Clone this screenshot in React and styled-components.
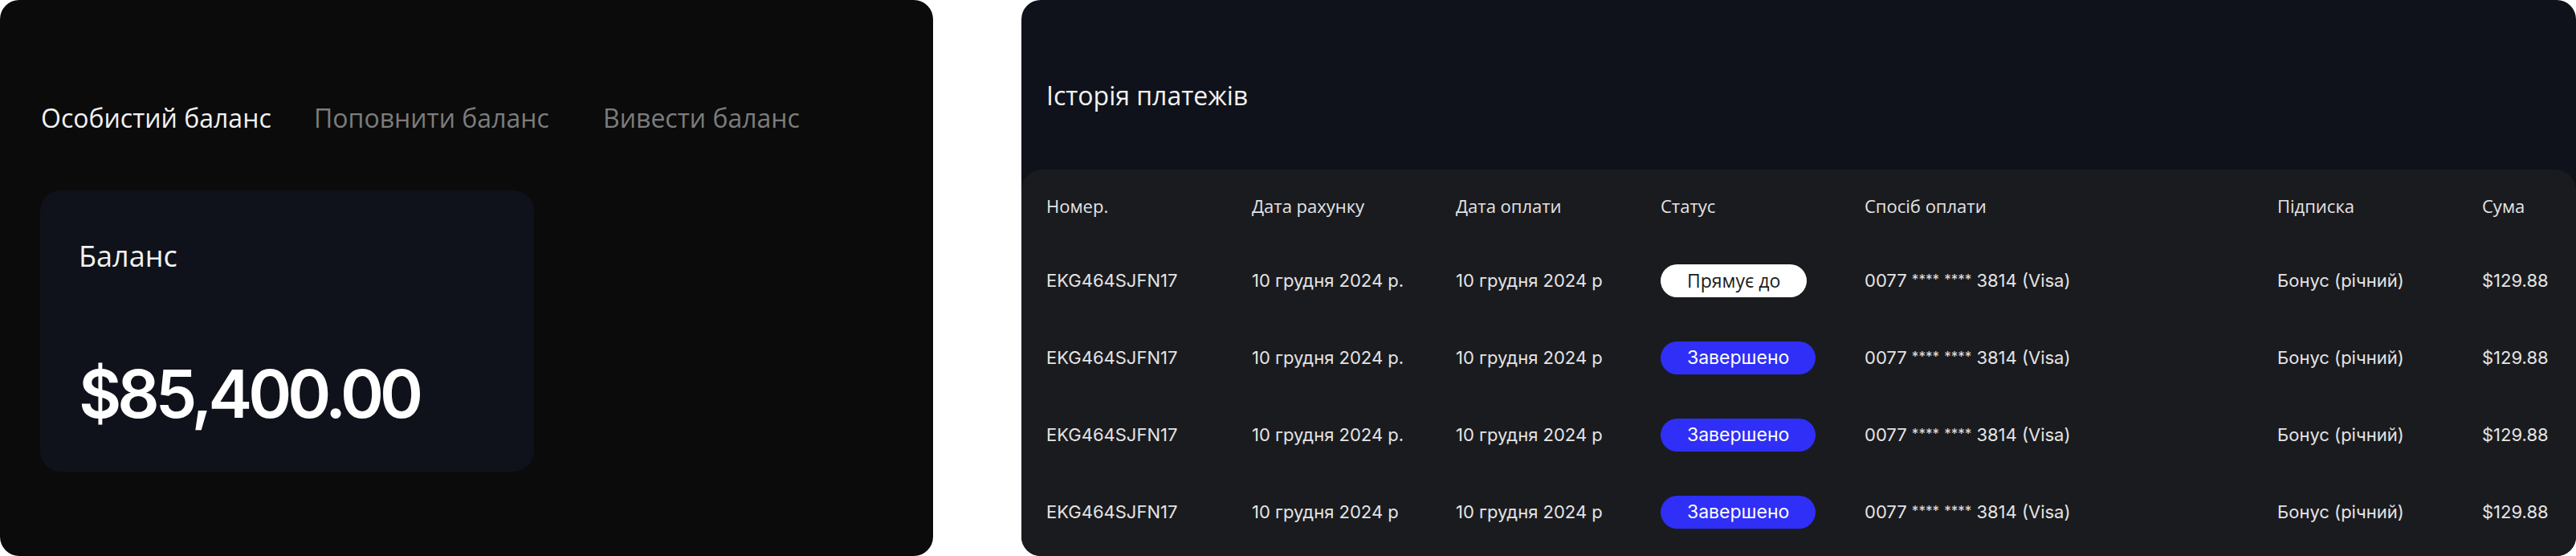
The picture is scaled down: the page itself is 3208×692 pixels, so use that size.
import styled, { createGlobalStyle } from 'styled-components';

const Global = createGlobalStyle`
  html, body {
    margin: 0;
    padding: 0;
    background: #ffffff;
  }
  body {
    font-family: "Open Sans", "Noto Sans", sans-serif;
    -webkit-font-smoothing: antialiased;
  }
`;

const Page = styled.div`
  display: flex;
  gap: 110px;
  width: 3208px;
  height: 692px;
`;

/* ---------- panel izquierdo: balance ---------- */
const BalancePanel = styled.section`
  width: 1162px;
  flex-shrink: 0;
  height: 100%;
  background: #0b0b0b;
  border-radius: 24px;
  padding: 125px 0 0 51px;
  box-sizing: border-box;
`;

const Tabs = styled.nav`
  display: grid;
  grid-template-columns: 340px 360px auto;
  height: 44px;
  align-items: center;
`;

const Tab = styled.span`
  font-family: "Open Sans", sans-serif;
  font-size: 32px;
  line-height: 44px;
  color: ${props => props.activo ? '#f2f2f2' : '#7c7c7c'};
  white-space: nowrap;
`;

const BalanceCard = styled.div`
  margin-top: 68px;
  margin-left: -1px;
  width: 615px;
  height: 350px;
  background: #0f121a;
  border-radius: 26px;
  padding: 60px 0 0 48px;
  box-sizing: border-box;
  display: flex;
  flex-direction: column;
`;

const CardLabel = styled.div`
  font-family: "Open Sans", sans-serif;
  font-size: 36px;
  line-height: 44px;
  color: #f2f2f2;
`;

const Amount = styled.div`
  margin-top: 100px;
  font-family: Inter, "Liberation Sans", sans-serif;
  font-weight: 600;
  font-size: 82px;
  line-height: 100px;
  letter-spacing: -5px;
  color: #ffffff;
`;

/* ---------- panel derecho: historial ---------- */
const HistoryPanel = styled.section`
  flex: 1;
  height: 100%;
  background: #0f121a;
  border-radius: 24px;
  overflow: hidden;
  display: flex;
  flex-direction: column;
`;

const Title = styled.h2`
  margin: 0;
  padding: 97px 0 0 31px;
  height: 211px;
  box-sizing: border-box;
  font-family: "Open Sans", sans-serif;
  font-weight: 400;
  font-size: 32px;
  line-height: 44px;
  color: #f2f2f2;
`;

const TableCard = styled.div`
  flex: 1;
  background: #1a1b1f;
  border-radius: 26px 26px 0 0;
  padding-left: 31px;
`;

const Row = styled.div`
  display: grid;
  grid-template-columns: 256px 254px 255px 254px 514px 255px 1fr;
  align-items: center;
  height: ${props => props.cabecera ? '90px' : '96px'};
`;

const HeadCell = styled.div`
  font-family: "Open Sans", sans-serif;
  font-size: 22px;
  color: #e4e4e4;
  white-space: nowrap;
`;

const Cell = styled.div`
  font-family: Inter, "Liberation Sans", sans-serif;
  font-size: 22px;
  color: #e4e4e4;
  white-space: nowrap;
`;

const Stars = styled.span`
  font-size: 17px;
  vertical-align: 3px;
`;

const Pill = styled.span`
  display: inline-flex;
  align-items: center;
  justify-content: center;
  height: 41px;
  padding: 0 33px;
  border-radius: 21px;
  font-family: ${props => props.pendiente ? '"Open Sans", sans-serif' : 'Inter, sans-serif'};
  font-size: 23px;
  background: ${props => props.pendiente ? '#ffffff' : '#2f2ff7'};
  color: ${props => props.pendiente ? '#1b1b1b' : '#ffffff'};
`;

const columnas = ['Номер.', 'Дата рахунку', 'Дата оплати', 'Статус', 'Спосіб оплати', 'Підписка', 'Сума'];

const pagos = [
  { id: 'EKG464SJFN17', rahunok: '10 грудня 2024 р.', oplata: '10 грудня 2024 р', pendiente: true },
  { id: 'EKG464SJFN17', rahunok: '10 грудня 2024 р.', oplata: '10 грудня 2024 р', pendiente: false },
  { id: 'EKG464SJFN17', rahunok: '10 грудня 2024 р.', oplata: '10 грудня 2024 р', pendiente: false },
  { id: 'EKG464SJFN17', rahunok: '10 грудня 2024 р', oplata: '10 грудня 2024 р', pendiente: false },
];

function App() {
  return (
    <>
      <Global />
      <Page>
        <BalancePanel>
          <Tabs>
            <Tab activo>Особистий баланс</Tab>
            <Tab>Поповнити баланс</Tab>
            <Tab>Вивести баланс</Tab>
          </Tabs>
          <BalanceCard>
            <CardLabel>Баланс</CardLabel>
            <Amount>$85,400.00</Amount>
          </BalanceCard>
        </BalancePanel>

        <HistoryPanel>
          <Title>Історія платежів</Title>
          <TableCard>
            <Row cabecera>
              {columnas.map(c => <HeadCell key={c}>{c}</HeadCell>)}
            </Row>
            {pagos.map((p, i) => (
              <Row key={i}>
                <Cell>{p.id}</Cell>
                <Cell>{p.rahunok}</Cell>
                <Cell>{p.oplata}</Cell>
                <Cell>
                  <Pill pendiente={p.pendiente}>{p.pendiente ? 'Прямує до' : 'Завершено'}</Pill>
                </Cell>
                <Cell>0077 <Stars>****</Stars> <Stars>****</Stars> 3814 (Visa)</Cell>
                <Cell>Бонус (річний)</Cell>
                <Cell>$129.88</Cell>
              </Row>
            ))}
          </TableCard>
        </HistoryPanel>
      </Page>
    </>
  );
}

export default App;
